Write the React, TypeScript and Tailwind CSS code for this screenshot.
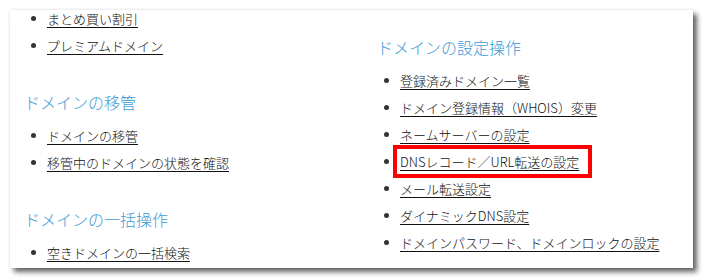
const LEFT_TOP = ['まとめ買い割引', 'プレミアムドメイン']

const LEFT_SECTIONS = [
  { title: 'ドメインの移管', items: ['ドメインの移管', '移管中のドメインの状態を確認'] },
  { title: 'ドメインの一括操作', items: ['空きドメインの一括検索'] },
]

const RIGHT_ITEMS = [
  '登録済みドメイン一覧',
  'ドメイン登録情報（WHOIS）変更',
  'ネームサーバーの設定',
  'DNSレコード／URL転送の設定',
  'メール転送設定',
  'ダイナミックDNS設定',
  'ドメインパスワード、ドメインロックの設定',
]

const HIGHLIGHT = 'DNSレコード／URL転送の設定'

function Item({ label }: { label: string }) {
  const marked = label === HIGHLIGHT
  return (
    <li className="flex h-[27px] items-center">
      <span className="ml-[7px] mr-[11px] h-[5px] w-[5px] shrink-0 rounded-full bg-[#333]" />
      {marked ? (
        <span className="-ml-[7px] flex h-[33px] items-center border-4 border-[#ff0000] pl-[3px] pr-[9px]">
          <a className="text-[13px] font-light leading-none text-[#111] underline underline-offset-[3px]">{label}</a>
        </span>
      ) : (
        <a className="text-[13px] font-light leading-none text-[#111] underline underline-offset-[3px]">{label}</a>
      )}
    </li>
  )
}

function Heading({ children }: { children: string }) {
  return <h3 className="mb-[8px] h-6 text-[16px] font-light leading-6 text-[#3d9bd6]">{children}</h3>
}

export default function App() {
  return (
    <div
      className="h-[279px] w-[704px] bg-white p-[10px]"
      style={{ fontFamily: '"Noto Sans CJK JP", "Noto Sans", sans-serif' }}
    >
      <div className="grid h-[258px] w-[683px] grid-cols-[353px_1fr] overflow-hidden bg-white shadow-[0_0_3px_rgba(0,0,0,0.12),4px_4px_5px_rgba(0,0,0,0.6)]">
        <div className="pl-[14px]">
          <ul className="-mt-[5px] mb-[31px]">
            {LEFT_TOP.map((t) => (
              <Item key={t} label={t} />
            ))}
          </ul>
          {LEFT_SECTIONS.map((s) => (
            <section key={s.title} className="mb-[31px]">
              <Heading>{s.title}</Heading>
              <ul>
                {s.items.map((t) => (
                  <Item key={t} label={t} />
                ))}
              </ul>
            </section>
          ))}
        </div>
        <div className="pl-[14px] pt-[25px]">
          <Heading>ドメインの設定操作</Heading>
          <ul>
            {RIGHT_ITEMS.map((t) => (
              <Item key={t} label={t} />
            ))}
          </ul>
        </div>
      </div>
    </div>
  )
}
